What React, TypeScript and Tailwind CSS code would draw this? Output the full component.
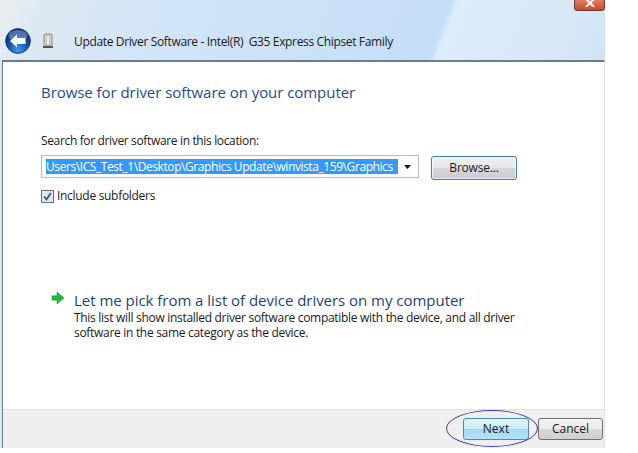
const FONT = "font-['Open_Sans','Noto_Sans',sans-serif]";

function BackButton() {
  return (
    <svg width="26" height="26" viewBox="0 0 26 26" className="shrink-0">
      <defs>
        <radialGradient id="backFill" cx="50%" cy="85%" r="70%">
          <stop offset="0%" stopColor="#3f9bf0" />
          <stop offset="55%" stopColor="#1452ad" />
          <stop offset="100%" stopColor="#0c2f78" />
        </radialGradient>
      </defs>
      <circle cx="13" cy="13" r="12.4" fill="url(#backFill)" stroke="#16346f" strokeWidth="0.8" />
      <ellipse cx="13" cy="7.5" rx="9.5" ry="5.5" fill="#ffffff" opacity="0.3" />
      <path d="M5 13 L12 6.5 V10 H20.5 V16 H12 V19.5 Z" fill="#ffffff" />
    </svg>
  );
}

function DeviceIcon() {
  return (
    <svg width="12" height="16" viewBox="0 0 12 16" className="shrink-0 block">
      <rect x="2" y="1" width="8" height="12" rx="1" fill="#d5d6cf" stroke="#8d8f86" />
      <rect x="4.5" y="3" width="3" height="9" fill="#f4f4ee" stroke="#a4a69c" strokeWidth="0.6" />
      <rect x="1" y="13" width="10" height="2" fill="#55574f" />
    </svg>
  );
}

function GreenArrow() {
  return (
    <svg width="14" height="14" viewBox="0 0 14 14" className="shrink-0">
      <path d="M1 4.8 H6 V1 L13 7 L6 13 V9.2 H1 Z" fill="#27b53c" stroke="#15913a" strokeWidth="0.5" />
    </svg>
  );
}

export default function App() {
  return (
    <div className={`relative w-[638px] h-[453px] overflow-hidden bg-white ${FONT}`}>
      <div className="w-[605px] h-[448px] flex flex-col bg-[#d9e8f5]">
        {/* Title area */}
        <header className="h-[60px] shrink-0 flex items-end pl-[5px] pb-[6px] bg-[linear-gradient(112deg,#e9edf1_0%,#dbe7f2_10%,#d3e5f7_25%,#cbe2f8_50%,#c4def7_72%,#dcecfb_73%,#d9e9f8_88%,#d2e3f3_100%)]">
          <BackButton />
          <div className="ml-[11px] mb-[5px]">
            <DeviceIcon />
          </div>
          <span className="ml-[20px] text-[12px] leading-[16px] pb-[4px] text-[#1a1a1a] whitespace-pre tracking-[-0.35px]">
            Update Driver Software - Intel(R)  G35 Express Chipset Family
          </span>
        </header>

        {/* Content */}
        <div className="flex-1 min-h-0 flex flex-col ml-[2px] border-t-2 border-t-[#6d7a8c] border-l border-l-[#6d7a8c] border-r border-r-[#dce6f0]">
          <main className="flex-1 flex flex-col pl-[38px] pt-[20px] bg-white">
            <h1 className="text-[15px] leading-[20px] text-[#1f4b8f] tracking-[-0.05px]">
              Browse for driver software on your computer
            </h1>

            <p className="mt-[31px] text-[12px] leading-[16px] text-[#1a1a1a] tracking-[-0.35px]">
              Search for driver software in this location:
            </p>

            <div className="mt-[6px] flex items-start">
              <div className="w-[378px] h-[23px] flex items-center border border-[#abc0d3] bg-white pl-[4px] pr-[4px]">
                <span className="w-[352px] overflow-hidden whitespace-nowrap bg-[#3399ff] text-white text-[12px] leading-[15px] tracking-[-0.42px]">
                  Users\ICS_Test_1\Desktop\Graphics Update\winvista_159\Graphics
                </span>
                <svg width="7" height="4" viewBox="0 0 7 4" className="ml-auto mr-[3px]">
                  <path d="M0 0 H7 L3.5 4 Z" fill="#111111" />
                </svg>
              </div>
              <button className="ml-[12px] mt-[1px] w-[86px] h-[24px] rounded-[3px] border border-[#3c7fb1] bg-[linear-gradient(#f2f2f2_0%,#e6e6e6_48%,#d4d8da_52%,#c9cdd0_100%)] text-[12px] text-[#1a1a1a] tracking-[-0.2px] shadow-[inset_0_0_0_1px_rgba(255,255,255,0.7)]">
                Browse...
              </button>
            </div>

            <label className="mt-[8px] flex items-center">
              <span className="w-[13px] h-[13px] flex items-center justify-center border border-[#707070] bg-[#dfe7f3]">
                <svg width="9" height="9" viewBox="0 0 9 9">
                  <path d="M1.2 4.5 L3.5 7.5 L7.8 1" fill="none" stroke="#3c4f8a" strokeWidth="1.7" />
                </svg>
              </span>
              <span className="ml-[3px] text-[12px] leading-[16px] text-[#1a1a1a] tracking-[-0.3px]">
                Include subfolders
              </span>
            </label>

            <div className="mt-[86px] ml-[10px] flex items-start">
              <div className="mt-[1px]">
                <GreenArrow />
              </div>
              <div className="ml-[9px]">
                <div className="text-[15px] leading-[20px] text-[#1f3f78] tracking-[-0.03px]">
                  Let me pick from a list of device drivers on my computer
                </div>
                <p className="text-[12px] leading-[15px] text-[#1a1a1a] w-[450px] tracking-[-0.3px]">
                  This list will show installed driver software compatible with the device, and all driver software in the same category as the device.
                </p>
              </div>
            </div>
          </main>

          {/* Footer */}
          <footer className="h-[39px] shrink-0 flex items-center justify-end gap-[9px] pr-[1px] bg-[#efefef] border-t border-[#dfdfdf]">
            <button className="w-[66px] h-[22px] rounded-[3px] border border-[#4f8ba8] bg-[linear-gradient(#e6f5fc_0%,#c9e9f9_48%,#a5d9f2_52%,#b5e2f7_100%)] text-[12px] text-[#1a1a1a]">
              Next
            </button>
            <button className="w-[65px] h-[22px] rounded-[3px] border border-[#707070] bg-[linear-gradient(#f2f2f2_0%,#ebebeb_48%,#d8d8d8_52%,#cfcfcf_100%)] text-[12px] text-[#1a1a1a]">
              Cancel
            </button>
          </footer>
        </div>
      </div>

      {/* Close button cut off at the top */}
      <div className="absolute left-[574px] top-[-6px] w-[31px] h-[17px] rounded-b-[3px] border border-[#6b3a32] bg-[linear-gradient(#e79a7e,#c9472c)] flex items-end justify-center">
        <svg width="10" height="8" viewBox="0 0 10 8" className="mb-[3px]">
          <path d="M1 0 L9 8 M9 0 L1 8" stroke="#ffffff" strokeWidth="2" />
        </svg>
      </div>

      {/* Hand-drawn ellipse around Next */}
      <div className="absolute left-[446px] top-[410px] w-[92px] h-[37px] rounded-[50%] border border-[#3a3fb5]" />
    </div>
  );
}
